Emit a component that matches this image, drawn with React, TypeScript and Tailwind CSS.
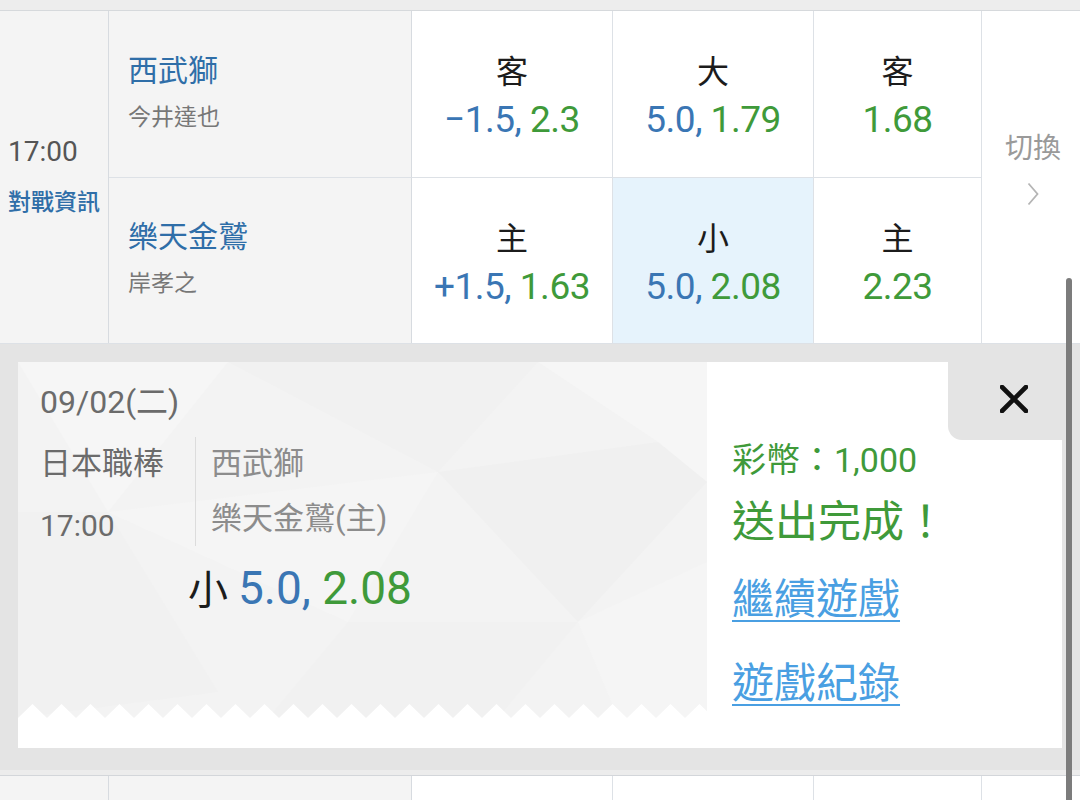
const FONT = "font-['Roboto','Noto_Sans_CJK_TC',sans-serif]";

type Odd = { label: string; line?: string; price: string; active?: boolean };

const rows: { team: string; pitcher: string; odds: Odd[] }[] = [
  {
    team: '西武獅',
    pitcher: '今井達也',
    odds: [
      { label: '客', line: '−1.5', price: '2.3' },
      { label: '大', line: '5.0', price: '1.79' },
      { label: '客', price: '1.68' },
    ],
  },
  {
    team: '樂天金鷲',
    pitcher: '岸孝之',
    odds: [
      { label: '主', line: '+1.5', price: '1.63' },
      { label: '小', line: '5.0', price: '2.08', active: true },
      { label: '主', price: '2.23' },
    ],
  },
];

function OddCell({ odd, last }: { odd: Odd; last: boolean }) {
  return (
    <div
      className={`flex flex-col items-center justify-center border-r border-[#dde1e6] pt-[4px] ${
        last ? '' : 'border-b'
      } ${odd.active ? 'bg-[#e6f3fc]' : 'bg-white'}`}
    >
      <span className="text-[32px] leading-[48px] text-[#1c1c1c]">{odd.label}</span>
      <span className="text-[37px] leading-[48px] tracking-[-0.5px]">
        {odd.line && <span className="text-[#3a76b4]">{odd.line}, </span>}
        <span className="text-[#3f9a3a]">{odd.price}</span>
      </span>
    </div>
  );
}

/** Low-poly backdrop of the bet slip ticket. */
function TicketBackdrop() {
  return (
    <svg
      className="absolute inset-0 h-full w-full"
      viewBox="0 0 689 356"
      preserveAspectRatio="none"
      aria-hidden
    >
      <rect width="689" height="356" fill="#f3f3f3" />
      <polygon points="0,0 210,0 90,150" fill="#f6f6f6" />
      <polygon points="210,0 520,0 420,110" fill="#f1f1f1" />
      <polygon points="520,0 689,0 689,120 640,80" fill="#f6f6f6" />
      <polygon points="420,110 640,80 689,120 560,260" fill="#f0f0f0" />
      <polygon points="0,150 90,150 200,330 0,356" fill="#f1f1f1" />
      <polygon points="90,150 420,110 330,260" fill="#f5f5f5" />
      <polygon points="330,260 560,260 480,356 250,356" fill="#f1f1f1" />
      <polygon points="560,260 689,200 689,356 600,356" fill="#f5f5f5" />
    </svg>
  );
}

function Zigzag() {
  const teeth = Array.from({ length: 24 }, (_, i) => i * 29);
  return (
    <svg className="absolute bottom-0 left-0 h-[14px] w-full" viewBox="0 0 689 14" preserveAspectRatio="none" aria-hidden>
      {teeth.map((x) => (
        <polygon key={x} points={`${x},14 ${x + 14.5},0 ${x + 29},14`} fill="#ffffff" />
      ))}
    </svg>
  );
}

export default function App() {
  return (
    <div className={`relative h-[800px] w-[1080px] overflow-hidden bg-white ${FONT}`}>
      <div className="h-[11px] border-b border-[#d6d9dc] bg-[#ededed]" />

      <div className="grid grid-cols-[109px_303px_201px_201px_168px_98px] grid-rows-[167px_165px]">
        <div className="row-span-2 flex flex-col justify-center border-r border-[#d7dbe0] bg-[#f4f4f4] pl-2 pt-[2px]">
          <span className="text-[28px] leading-[50px] text-[#555]">17:00</span>
          <span className="text-[23px] font-medium leading-[52px] text-[#2f6ea8]">對戰資訊</span>
        </div>

        {rows.map((row, r) => (
          <div key={row.team} className="contents">
            <div
              className={`flex flex-col justify-center border-r border-[#d7dbe0] bg-[#f4f4f4] pl-[19px] ${
                r === 0 ? 'border-b border-b-[#dde1e6]' : ''
              }`}
            >
              <span className="text-[30px] leading-[44px] text-[#2f6ea8]">{row.team}</span>
              <span className="pt-[3px] text-[23px] leading-[44px] text-[#777]">{row.pitcher}</span>
            </div>
            {row.odds.map((odd) => (
              <OddCell key={odd.label + odd.price} odd={odd} last={r === 1} />
            ))}
            {r === 0 && (
              <div className="row-span-2 flex flex-col items-center justify-center pb-[22px] pl-[4px]">
                <span className="text-[28px] leading-[46px] text-[#9a9a9a]">切換</span>
                <svg className="mt-[10px]" width="12" height="24" viewBox="0 0 12 24" aria-hidden>
                  <path d="M1.5 1.5 10.5 12 1.5 22.5" fill="none" stroke="#b5b5b5" strokeWidth="1.8" />
                </svg>
              </div>
            )}
          </div>
        ))}
      </div>

      {/* bet confirmation panel */}
      <div className="border-t border-[#dde1e6] bg-[#e4e4e4] px-[18px] pt-[18px] pb-[22px]">
        <div className="relative flex h-[386px] bg-white">
          <div className="relative h-[356px] w-[689px] shrink-0">
            <TicketBackdrop />
            <Zigzag />
            <div className="relative pl-[22px] pt-[9px]">
              <div className="text-[32px] leading-[62px] text-[#6b6b6b]">09/02(二)</div>
              <div className="flex items-start">
                <div className="w-[155px] text-[31px] leading-[62px] text-[#6b6b6b]">
                  <div>日本職棒</div>
                  <div className="text-[30px]">17:00</div>
                </div>
                <div className="mt-[4px] h-[109px] w-px bg-[#dcdcdc]" />
                <div className="mt-[3px] pl-[15px] text-[31px] leading-[55px] text-[#8c8c8c]">
                  <div>西武獅</div>
                  <div>樂天金鷲(主)</div>
                </div>
              </div>
              <div className="mt-[2px] pl-[148px] leading-[58px]">
                <span className="text-[40px] text-[#1c1c1c]">小 </span>
                <span className="text-[46px] text-[#3a76b4]">5.0, </span>
                <span className="text-[46px] text-[#3f9a3a]">2.08</span>
              </div>
            </div>
          </div>

          <div className="flex flex-col pl-[25px] pt-[76px]">
            <span className="text-[34px] leading-[44px] text-[#3f9a3a]">彩幣：1,000</span>
            <span className="text-[43px] leading-[80px] text-[#3f9a3a]">送出完成！</span>
            <a className="text-[42px] leading-[76px] text-[#4a9fe2] underline decoration-2 underline-offset-[6px]">
              繼續遊戲
            </a>
            <a className="text-[42px] leading-[92px] text-[#4a9fe2] underline decoration-2 underline-offset-[6px]">
              遊戲紀錄
            </a>
          </div>

          <button
            type="button"
            aria-label="Close"
            className="absolute right-0 top-0 flex h-[78px] w-[114px] items-start justify-end rounded-bl-[14px] bg-[#e4e4e4] pr-[34px] pt-[23px]"
          >
            <svg width="28" height="28" viewBox="0 0 28 28" aria-hidden>
              <path d="M2 2 26 26M26 2 2 26" stroke="#111" strokeWidth="4.6" strokeLinecap="round" />
            </svg>
          </button>
        </div>
      </div>
      <div className="h-[6px] border-b border-[#d3d6da] bg-[#ececec]" />

      <div className="grid h-[40px] grid-cols-[109px_303px_201px_201px_168px_98px]">
        <div className="border-r border-[#d7dbe0] bg-[#f4f4f4]" />
        <div className="border-r border-[#d7dbe0] bg-[#f4f4f4]" />
        <div className="border-r border-[#dde1e6]" />
        <div className="border-r border-[#dde1e6]" />
        <div className="border-r border-[#dde1e6]" />
        <div />
      </div>

      {/* scrollbar thumb */}
      <div className="absolute left-[1066px] top-[278px] h-[530px] w-[6px] rounded-t-[3px] bg-[#7c7c7c]" />
    </div>
  );
}
